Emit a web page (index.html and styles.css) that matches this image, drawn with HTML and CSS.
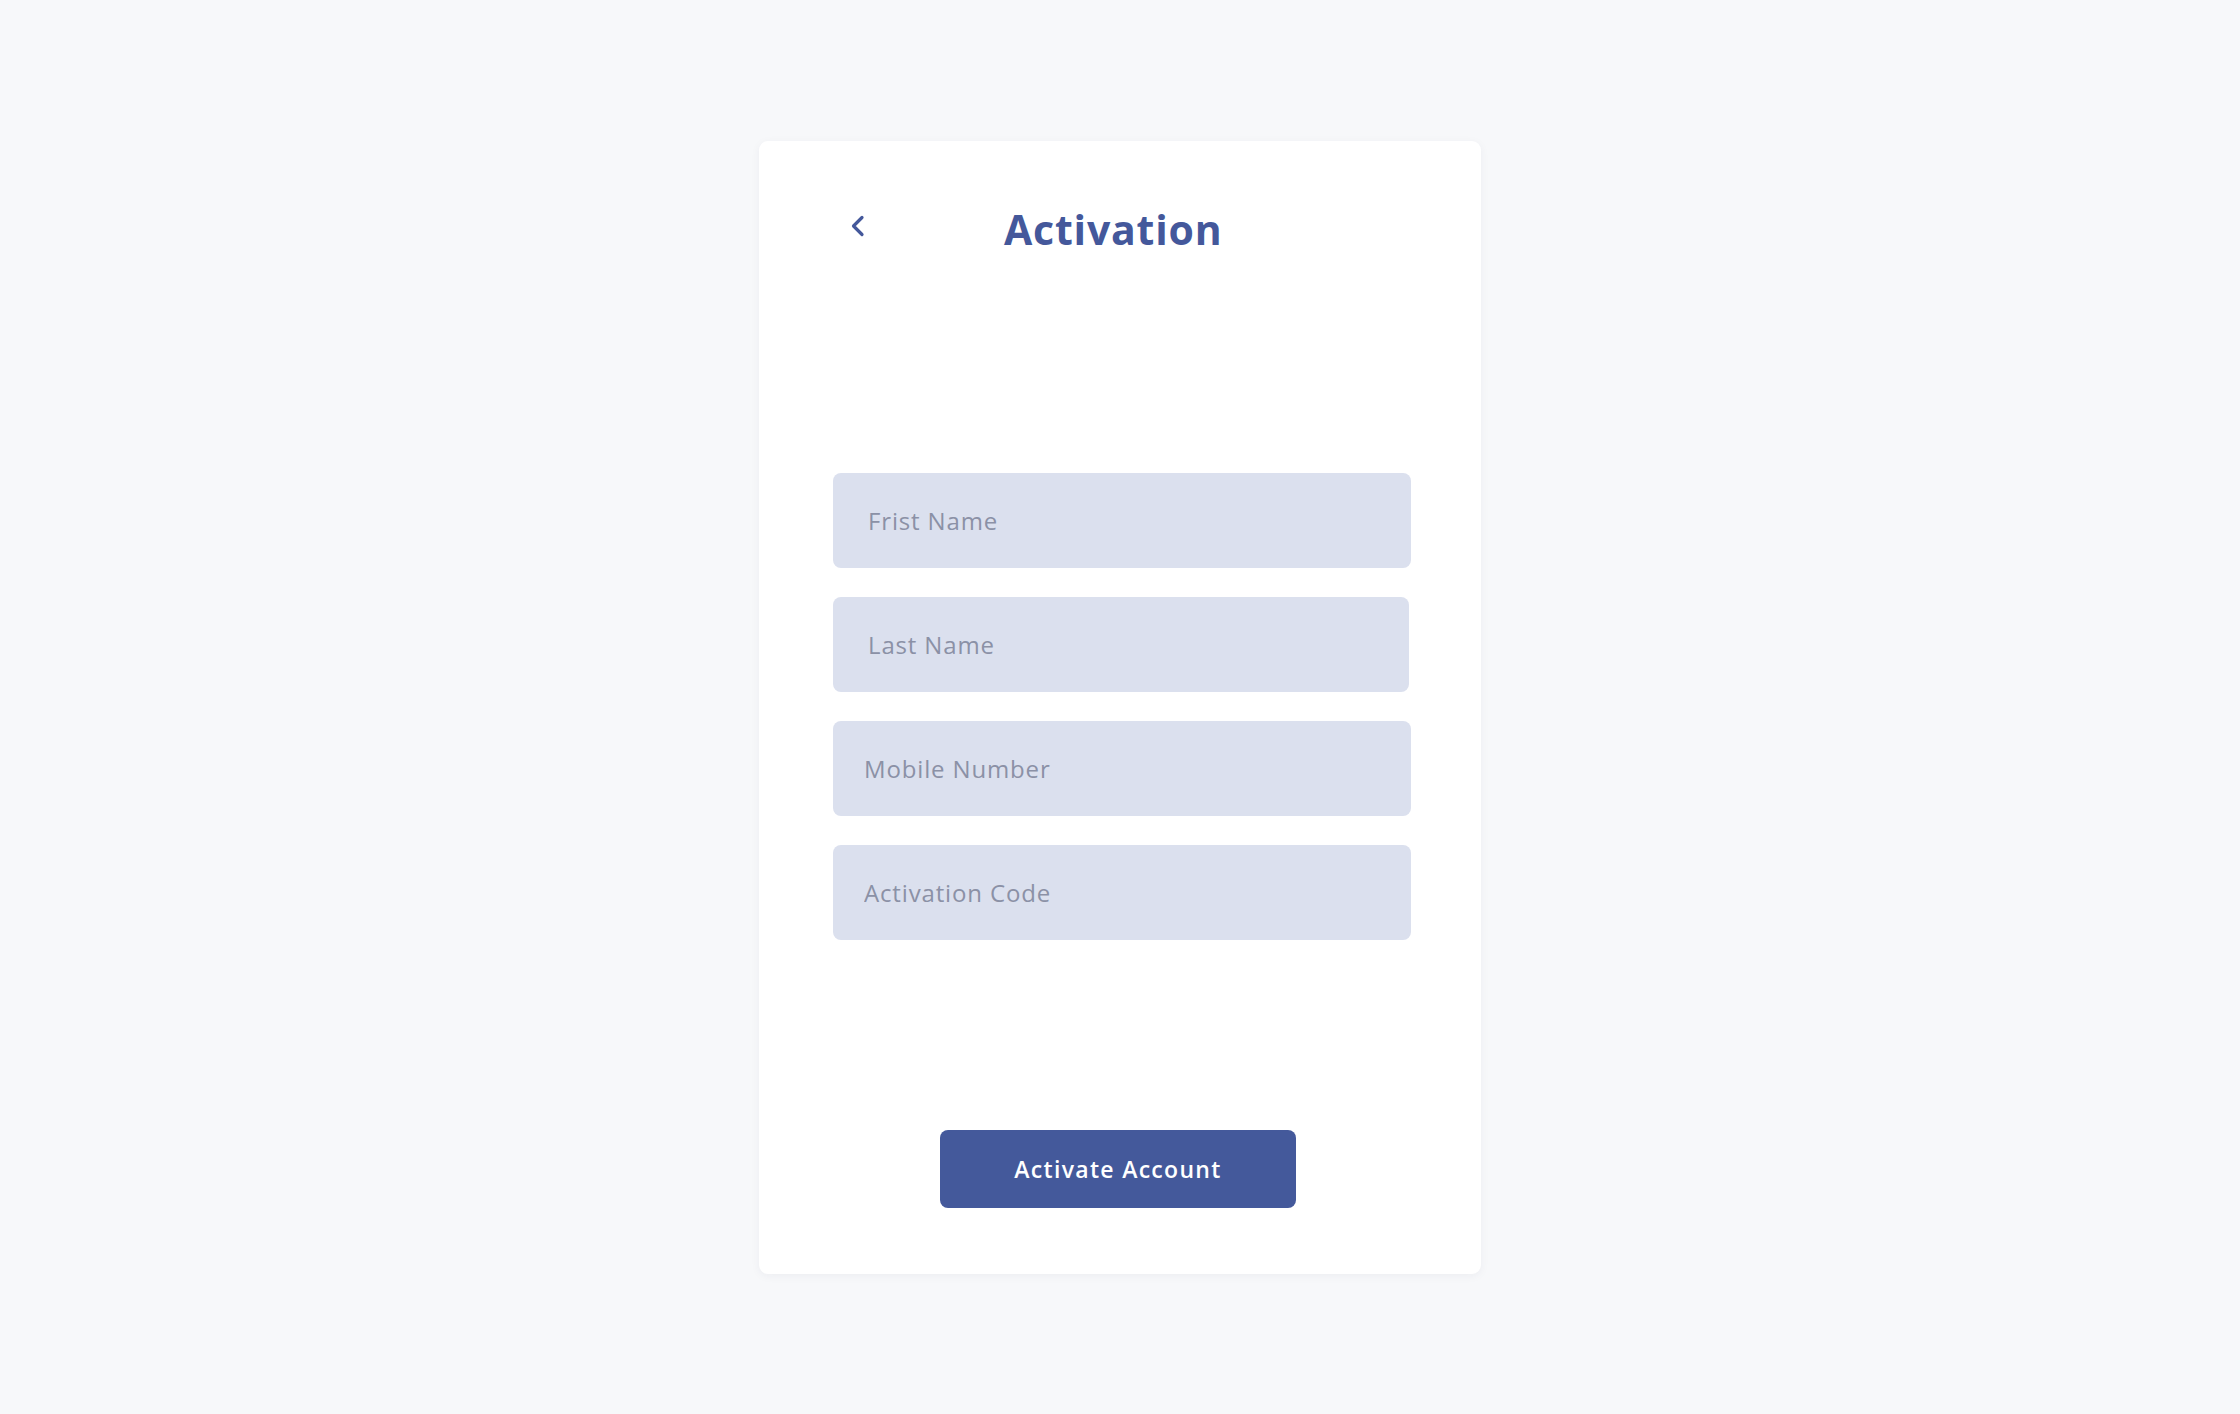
FILE: index.html
```html
<!DOCTYPE html>
<html lang="en">
<head>
<meta charset="utf-8">
<title>Activation</title>
<link rel="stylesheet" href="styles.css">
</head>
<body>
<main class="page">
  <section class="card">
    <header class="card-header">
      <button class="back" type="button" aria-label="Back">
        <svg width="15" height="22" viewBox="0 0 15 22" fill="none" stroke="currentColor" stroke-width="3.2" stroke-linecap="round" stroke-linejoin="round"><polyline points="12,2.5 3.5,11 12,19.5"/></svg>
      </button>
      <h1 class="title">Activation</h1>
    </header>
    <form class="form">
      <input class="field field-wide" type="text" placeholder="Frist Name">
      <input class="field field-wide field-short" type="text" placeholder="Last Name">
      <input class="field field-narrow" type="text" placeholder="Mobile Number">
      <input class="field field-narrow" type="text" placeholder="Activation Code">
    </form>
    <div class="actions">
      <button class="primary" type="button">Activate Account</button>
    </div>
  </section>
</main>
</body>
</html>
```
FILE: styles.css
```css
* { box-sizing: border-box; }
html, body { margin: 0; padding: 0; }
body {
  background: #f7f8fa;
  font-family: "Open Sans", "Noto Sans", sans-serif;
}
.page {
  min-height: 100vh;
  display: flex;
  align-items: center;
  justify-content: center;
}
.card {
  width: 722px;
  height: 1133px;
  background: #ffffff;
  border-radius: 9px;
  box-shadow: 0 2px 10px rgba(30, 40, 80, 0.05);
  padding: 60px 70px 66px 74px;
  display: flex;
  flex-direction: column;
}
.card-header {
  display: flex;
  align-items: center;
  height: 56px;
}
.back {
  background: none;
  border: 0;
  padding: 0;
  margin: 0 0 6px 17px;
  color: #44589b;
  display: flex;
  cursor: pointer;
}
.title {
  margin: 0 0 0 139px;
  font-size: 41px;
  line-height: 56px;
  font-weight: 700;
  letter-spacing: 0.8px;
  color: #44589b;
}
.form {
  margin-top: 216px;
  display: flex;
  flex-direction: column;
  gap: 29px;
}
.field {
  height: 95px;
  width: 100%;
  border: 0;
  border-radius: 8px;
  background: #dbe0ee;
  font-family: "Open Sans", "Noto Sans", sans-serif;
  font-size: 24px;
  letter-spacing: 0.85px;
  color: #4a5068;
  outline: none;
}
.field::placeholder { color: #8b91a6; opacity: 1; }
.field-wide { padding: 0 20px 0 35px; }
.field-short { width: calc(100% - 2px); }
.field-narrow { padding: 0 20px 0 31px; }
.actions {
  margin-top: 190px;
  display: flex;
  justify-content: center;
}
.primary {
  width: 356px;
  height: 78px;
  border: 0;
  border-radius: 8px;
  background: #44599b;
  color: #ffffff;
  font-family: "Open Sans", "Noto Sans", sans-serif;
  font-size: 23px;
  font-weight: 600;
  letter-spacing: 1.3px;
  cursor: pointer;
  margin-left: -8px;
}
```
